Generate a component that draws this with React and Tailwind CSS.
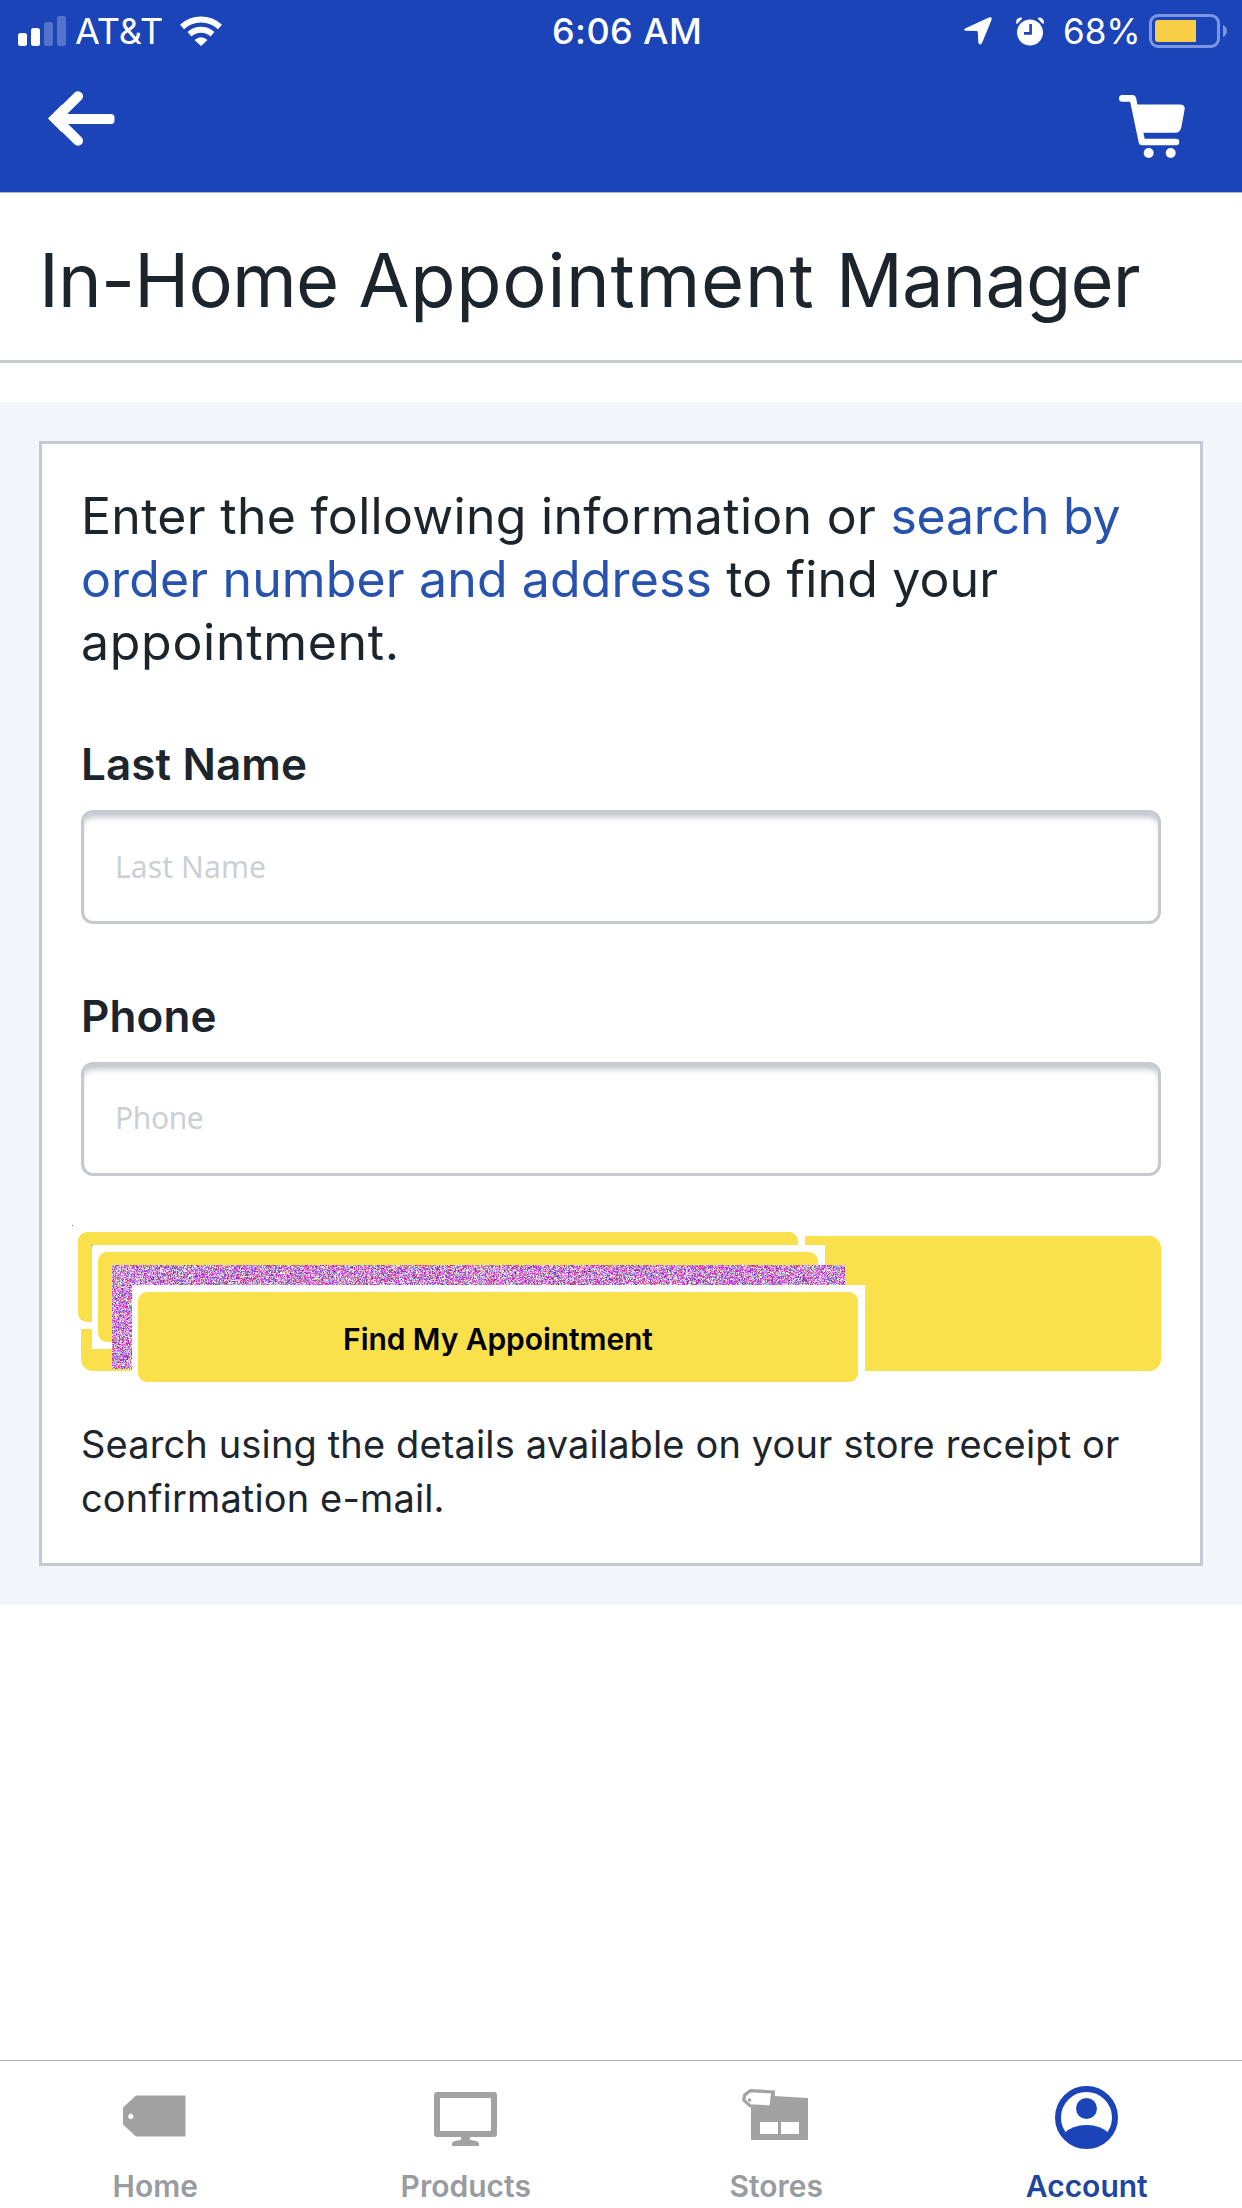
import { useEffect, useRef } from "react";

function StatusBar() {
  return (
    <div className="grid h-[62px] grid-cols-[551px_1fr_auto] items-center text-[36px] leading-none text-white">
      <div className="flex items-center pl-[18px]">
        <svg width="48" height="30" viewBox="0 0 48 30" fill="white">
          <rect x="0" y="17" width="9" height="13" rx="2.5" />
          <rect x="13" y="12" width="9" height="18" rx="2.5" />
          <rect x="26" y="6" width="9" height="24" rx="2.5" fillOpacity=".25" />
          <rect x="39" y="0" width="9" height="30" rx="2.5" fillOpacity=".25" />
        </svg>
        <span className="ml-[9px] w-[88px]">AT&amp;T</span>
        <svg className="ml-[17px]" width="42" height="30" viewBox="0 0 42 30">
          <path d="M2 11 A28 28 0 0 1 40 11" fill="none" stroke="white" strokeWidth="6" />
          <path d="M9.5 18.2 A17 17 0 0 1 32.5 18.2" fill="none" stroke="white" strokeWidth="6" />
          <path d="M14.5 24 Q21 18.5 27.5 24 L21 30Z" fill="white" />
        </svg>
      </div>
      <span className="pl-px font-medium tracking-[0.4px]">6:06 AM</span>
      <div className="flex items-center pr-[15px]">
        <svg width="28" height="28" viewBox="0 0 28 28">
          <path d="M1.6 11.2 L24.8.6 Q28.6-.6 27.4 3.2 L18 26 Q15.6 29.4 14.3 25.6 L13.8 15 Q13.7 14 12.6 14 L2 13.8 Q-1.4 13 1.6 11.2Z" fill="white" />
        </svg>
        <svg className="ml-6" width="28" height="29" viewBox="0 0 28 29">
          <circle cx="14" cy="15.5" r="13" fill="white" />
          <path d="M.2 6.4 Q-.6.4 5.6.4 L6.3 1.6 L1.4 6.8Z M27.8 6.4 Q28.6.4 22.4.4 L21.7 1.6 L26.6 6.8Z" fill="white" />
          <path d="M14.6 7 V16.4 H8" fill="none" stroke="#1b44b8" strokeWidth="2.6" />
        </svg>
        <span className="ml-[19px] w-[78px] text-[35px]">68%</span>
        <svg className="ml-[8px]" width="78" height="34" viewBox="0 0 78 34">
          <rect x="1.5" y="1.5" width="68" height="31" rx="7.5" fill="none" stroke="#7b97e2" strokeWidth="3" />
          <path d="M9 6 H47 V28 H9 Q6 28 6 25 V9 Q6 6 9 6Z" fill="#f8ce46" />
          <path d="M74 11 Q78 13 78 17 Q78 21 74 23Z" fill="#7b97e2" />
        </svg>
      </div>
    </div>
  );
}

function Header() {
  return (
    <header className="h-[193px] border-b border-[#a9b4dc] bg-[#1b44b8]">
      <StatusBar />
      <div className="flex items-start justify-between pt-[29px] pr-[57px] pl-12">
        <svg width="67" height="55" viewBox="0 0 67 55" fill="none" stroke="white" strokeWidth="10">
          <path d="M30 5.3 L7.5 27.5 L30 49.7" strokeLinecap="round" />
          <path d="M0 27.5 L14 13.5 L22 26 L22 29 L14 41.5Z" fill="white" stroke="none" />
          <rect x="12" y="23" width="54.5" height="10" rx="3.5" fill="white" stroke="none" />
        </svg>
        <svg className="mt-1" width="66" height="63" viewBox="0 0 66 63">
          <path d="M3.2 3.4 H13.8 L23 47 H57" fill="none" stroke="white" strokeWidth="6.6" strokeLinecap="round" strokeLinejoin="round" />
          <path d="M16 9.5 H61 Q66 9.5 65.7 14 L62.5 31.5 Q61.5 37.8 56 37.8 H21Z" fill="white" />
          <circle cx="29.7" cy="58" r="5" fill="white" />
          <circle cx="51.7" cy="58" r="5" fill="white" />
        </svg>
      </div>
    </header>
  );
}

function Field({ label, className, inputClassName }) {
  return (
    <label className={className}>
      <span className="block text-[44px] leading-[60px] font-semibold tracking-[0.1px]">{label}</span>
      <input
        placeholder={label}
        className={`mt-4 block h-[114px] w-full rounded-xl border-[3px] border-[#c6c9d0] bg-white px-[31px] font-['Noto_Sans',sans-serif] text-[30px] shadow-[inset_0_7px_6px_-3px_#bfc1c7] outline-none placeholder:text-[#cccfd4] placeholder:opacity-100 ${inputClassName}`}
      />
    </label>
  );
}

function Noise() {
  const ref = useRef(null);
  useEffect(() => {
    const ctx = ref.current.getContext("2d");
    const image = ctx.createImageData(733, 104);
    let seed = 12345;
    const random = () => {
      seed ^= seed << 13;
      seed ^= seed >>> 17;
      seed ^= seed << 5;
      return (seed >>> 0) / 4294967296;
    };
    for (let i = 0; i < image.data.length; i += 4) {
      const green = 25 + random() * 230;
      image.data[i] = Math.max(green * 0.92, 90 + Math.min(165, random() * 220));
      image.data[i + 1] = green;
      image.data[i + 2] = Math.max(green * 0.94, 95 + Math.min(160, random() * 240));
      image.data[i + 3] = 255;
    }
    ctx.putImageData(image, 0, 0);
  }, []);
  return <canvas ref={ref} width={733} height={104} className="absolute top-[29px] left-[31px]" />;
}

function FindButton() {
  return (
    <button className="relative mt-[60px] block h-[135px] w-full rounded-xl bg-[#fae04b] text-black">
      <span className="absolute -top-[11px] -left-[9px] h-[104px] w-[733px] bg-white pt-[7px] pl-[6px]">
        <span className="block h-[90px] w-[720px] rounded-[9px] bg-[#fae04b]" />
        <span className="absolute top-0 left-0 size-px bg-[#4c7f8c]" />
      </span>
      <span className="absolute top-[9px] left-[11px] h-[104px] w-[733px] bg-white pt-[7px] pl-[6px]">
        <span className="block h-[90px] w-[720px] rounded-[9px] bg-[#fae04b]" />
        <span className="absolute top-0 left-0 size-px bg-[#4c7f8c]" />
      </span>
      <Noise />
      <span className="absolute top-[49px] left-[51px] h-[104px] w-[733px] bg-white pt-[7px] pl-[6px]">
        <span className="flex h-[90px] w-[720px] items-center justify-center rounded-[9px] bg-[#fae04b] pt-[3px] text-[30px] leading-9 font-semibold tracking-[-0.08px]">
          Find My Appointment
        </span>
      </span>
    </button>
  );
}

function HomeIcon() {
  return (
    <svg className="-ml-px" width="63" height="63" viewBox="0 0 63 63">
      <path fillRule="evenodd" d="M13 9.5 H62.5 V50.5 H13 L0 38.5 V21.5Z M7.8 27.8 a2.7 2.7 0 1 0 .01 0Z" fill="#a2a2a2" />
    </svg>
  );
}

function ProductsIcon() {
  return (
    <svg width="63" height="63" viewBox="0 0 63 63" fill="#a2a2a2">
      <path fillRule="evenodd" d="M3 6 H60 Q63 6 63 9 V48 Q63 51 60 51 H3 Q0 51 0 48 V9 Q0 6 3 6Z M6 12 V45 H57 V12Z" />
      <path d="M27 50 H36 V54 Q45 54.5 45 57.5 V60 H18 V57.5 Q18 54.5 27 54Z" />
    </svg>
  );
}

function StoresIcon() {
  return (
    <svg className="-ml-[3px]" width="66" height="63" viewBox="0 0 66 63">
      <path fillRule="evenodd" d="M9 15 L32 10 L66 12 V54 H9Z M18 36 V48 H36 V36Z M39 36 V48 H57 V36Z" fill="#a2a2a2" />
      <path d="M8.5 4.6 L31 6 L29 21 L8 19.8 L1.8 14 L2.7 9Z" fill="white" stroke="#a2a2a2" strokeWidth="3.2" />
      <path d="M27.5 21 L29.5 6 L32.8 4.5 V22.8 L27.5 22.6Z" fill="#a2a2a2" />
      <circle cx="7.6" cy="14" r="1.8" fill="#a2a2a2" />
    </svg>
  );
}

function AccountIcon() {
  return (
    <svg width="63" height="63" viewBox="0 0 63 63">
      <circle cx="31.5" cy="31.5" r="28.5" fill="white" stroke="#1b44b8" strokeWidth="6" />
      <circle cx="31.5" cy="22.5" r="10.5" fill="#1b44b8" />
      <path d="M9 47.5 Q17 39 31.5 39 Q46 39 54 47.5 Q46 61 31.5 61 Q17 61 9 47.5Z" fill="#1b44b8" />
    </svg>
  );
}

const tabs = [
  { label: "Home", icon: HomeIcon, color: "text-[#989ba0]" },
  { label: "Products", icon: ProductsIcon, color: "text-[#989ba0]" },
  { label: "Stores", icon: StoresIcon, color: "text-[#989ba0]" },
  { label: "Account", icon: AccountIcon, color: "text-[#1f459f]" },
];

export default function App() {
  return (
    <div className="flex h-[2208px] w-[1242px] flex-col overflow-hidden bg-white font-['Inter',sans-serif] text-[#1d252c]">
      <Header />
      <h1 className="h-[170px] border-b-[3px] border-[#c9cbd3] pt-[42px] pl-[39px] text-[74px] leading-[90px] whitespace-nowrap">
        <span className="tracking-[-0.8px]">In-Home </span>
        <span className="tracking-[0.75px]">Appointment </span>
        <span className="tracking-[-0.9px]">Manager</span>
      </h1>
      <main className="mt-[39px] bg-[#f4f5fa] p-[39px]">
        <section className="border-[3px] border-[#c6c9d1] bg-white px-[39px] pt-[41px] pb-[38px]">
          <p className="text-[50px] leading-[63px] tracking-[0.14px] whitespace-nowrap">
            <span className="tracking-[0.29px]">Enter the following information or </span>
            <span className="tracking-[-0.25px] text-[#2753ae]">search by</span>
            <br />
            <span className="text-[#2753ae]">order number and address</span> to find your
            <br />
            <span className="tracking-[0.7px]">appointment.</span>
          </p>
          <Field label="Last Name" className="mt-[60px] block" inputClassName="pb-px tracking-[0.1px]" />
          <Field label="Phone" className="mt-[62px] block" inputClassName="pb-[3px] tracking-[-0.4px]" />
          <FindButton />
          <p className="mt-[46px] text-[38px] leading-[54px] tracking-[0.14px] whitespace-nowrap">
            Search using the details available on your store receipt or
            <br />
            confirmation e-mail.
          </p>
        </section>
      </main>
      <nav className="mt-auto grid h-[148px] grid-cols-4 border-t border-[#adadad] pt-[25px]">
        {tabs.map(({ label, icon: Icon, color }) => (
          <a key={label} className="flex flex-col items-center">
            <Icon />
            <span className={`mt-[19px] text-[30px] leading-9 font-semibold ${color}`}>{label}</span>
          </a>
        ))}
      </nav>
    </div>
  );
}
